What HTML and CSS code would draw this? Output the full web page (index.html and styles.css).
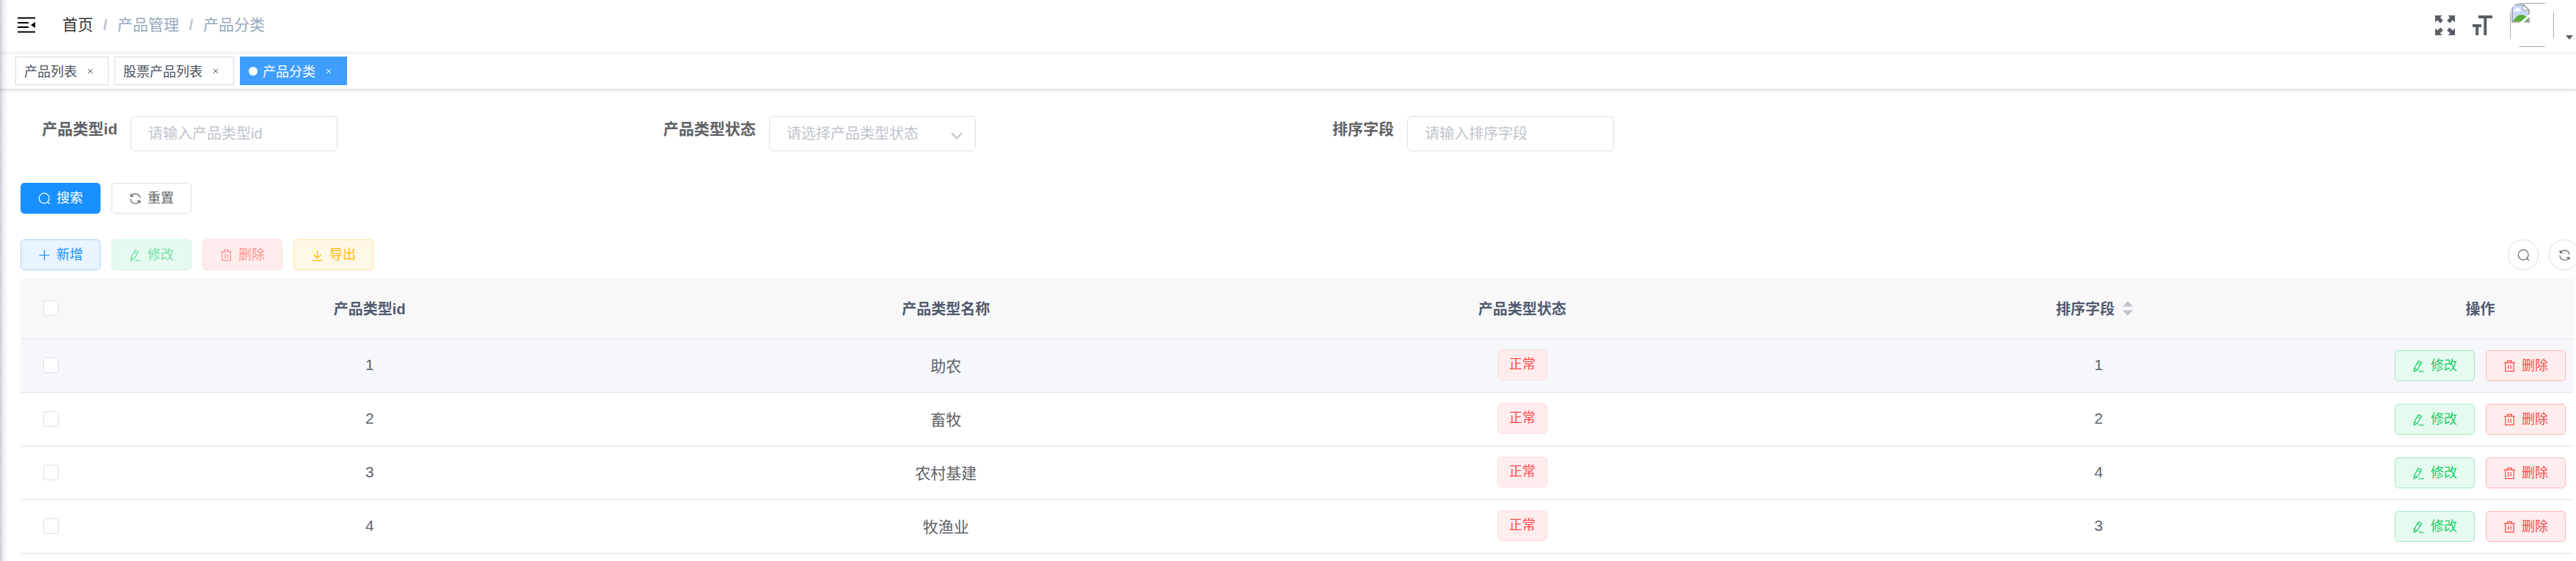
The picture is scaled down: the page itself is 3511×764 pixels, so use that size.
FILE: index.html
```html
<!DOCTYPE html>
<html lang="zh-CN">
<head>
<meta charset="utf-8">
<title>产品分类</title>
<link rel="stylesheet" href="styles.css">
</head>
<body>
<svg class="sprite" aria-hidden="true">
  <symbol id="i-search" viewBox="0 0 18 18"><circle cx="8.700" cy="8.500" r="7.300"/><path d="M13.700 13.700l3 3"/></symbol>
  <symbol id="i-refresh" viewBox="0 0 18 18"><path d="M2.500 2v3.700h3.700M2.900 5.500A7 7 0 0 1 15.900 8.200M15.600 16v-3.700h-3.700M15.200 12.500A7 7 0 0 1 2.100 9.200"/></symbol>
  <symbol id="i-plus" viewBox="0 0 18 18"><path d="M9 1.500v15M1.500 9h15"/></symbol>
  <symbol id="i-edit" viewBox="0 0 18 18"><path d="M8.900 1.800l4.300 2.500-6.100 10.300-4.700 2.300.4-5zM7.200 4.700l4.300 2.500M2.700 12.200l4.200 2.400M9 16.700h7.600"/></symbol>
  <symbol id="i-delete" viewBox="0 0 18 18"><path d="M1 4.200h16M6 4V1.500h6V4M3 4.200v12.300h12V4.200M7.200 7.500v6M10.800 7.500v6"/></symbol>
  <symbol id="i-download" viewBox="0 0 18 18"><path d="M9 1.500v11.700M3.800 8.200L9 13.300l5.200-5.100M2 16.500h14"/></symbol>
</svg>

<header class="navbar">
  <button class="icon-btn menu-btn" aria-label="折叠菜单">
    <svg width="24" height="22" viewBox="0 0 24 22"><path d="M0 1.500h24M0 8h15M0 14h15M0 20.500h24" stroke="#000" stroke-width="2"/><path d="M24 7v8l-6-4z"/></svg>
  </button>
  <nav class="breadcrumb" aria-label="面包屑">
    <a href="#">首页</a><span class="sep">/</span><span>产品管理</span><span class="sep">/</span><span>产品分类</span>
  </nav>
  <div class="nav-right">
    <button class="icon-btn" aria-label="全屏">
      <svg width="27" height="27" viewBox="0 0 27 27" fill="#5a5e66"><g id="arrow"><path d="M0 0h9.500L6.800 2.800l4 4-3.500 3.600-4.200-4L0 9.500z"/></g><use href="#arrow" transform="matrix(-1 0 0 1 27 0)"/><use href="#arrow" transform="matrix(1 0 0 -1 0 27)"/><use href="#arrow" transform="matrix(-1 0 0 -1 27 27)"/></svg>
    </button>
    <button class="icon-btn" aria-label="布局大小">
      <svg width="27" height="27" viewBox="0 0 27 27"><path d="M8 2h19M17.300 2v25M0 14h12M6.200 14v13" stroke="#5a5e66" stroke-width="4"/></svg>
    </button>
    <button class="icon-btn avatar-btn" aria-label="用户菜单">
      <span class="avatar">
        <svg width="60" height="60" viewBox="0 0 60 60"><rect x=".5" y=".5" width="59" height="59" fill="none" stroke="#a8a8a8"/><path d="M3 2.500h15.500l7.500 7V26H3z" fill="#c9dafa" stroke="#9a9a9a" stroke-width="1.500"/><path d="M18 3v7h8z" fill="#fff" stroke="#9a9a9a"/><path d="M5 11c1-3 3-2 3.500-4 2-2 4 0 4 1.500 2 0 3 1.500 3 2.500z" fill="#fff"/><path d="M4 25c3-5 7-9 11-9s7 2 10 5v4z" fill="#5aae3c"/><path d="M13 27L27 15v4l-9 8z" fill="#fff"/></svg>
      </span>
      <svg width="10" height="6" viewBox="0 0 10 6"><path d="M0 0h10L5 6z" fill="#5a5e66"/></svg>
    </button>
  </div>
</header>

<nav class="tags" aria-label="标签页">
  <div class="tab"><a href="#">产品列表</a><button class="close" aria-label="关闭产品列表"><svg width="8" height="8" viewBox="0 0 8 8"><path d="M1 1l6 6M7 1L1 7"/></svg></button></div>
  <div class="tab"><a href="#">股票产品列表</a><button class="close" aria-label="关闭股票产品列表"><svg width="8" height="8" viewBox="0 0 8 8"><path d="M1 1l6 6M7 1L1 7"/></svg></button></div>
  <div class="tab active"><a href="#">产品分类</a><button class="close" aria-label="关闭产品分类"><svg width="8" height="8" viewBox="0 0 8 8"><path d="M1 1l6 6M7 1L1 7"/></svg></button></div>
</nav>

<main class="main">
  <form>
    <div class="filters">
      <div class="field"><label for="type-id">产品类型id</label><input id="type-id" type="text" placeholder="请输入产品类型id"></div>
      <div class="field"><label for="type-status">产品类型状态</label>
        <span class="select"><select id="type-status"><option>请选择产品类型状态</option><option>正常</option></select><svg width="16" height="10" viewBox="0 0 16 10"><path d="M1 1l7 7.500L15 1"/></svg></span>
      </div>
      <div class="field"><label for="sort">排序字段</label><input id="sort" type="text" placeholder="请输入排序字段"></div>
    </div>
    <div class="buttons">
      <button class="btn solid" type="button"><svg><use href="#i-search"/></svg>搜索</button>
      <button class="btn" type="button"><svg><use href="#i-refresh"/></svg>重置</button>
    </div>
  </form>

  <div class="toolbar">
    <div class="buttons">
      <button class="btn blue"><svg><use href="#i-plus"/></svg>新增</button>
      <button class="btn green" disabled><svg><use href="#i-edit"/></svg>修改</button>
      <button class="btn red" disabled><svg><use href="#i-delete"/></svg>删除</button>
      <button class="btn yellow"><svg><use href="#i-download"/></svg>导出</button>
    </div>
    <div class="buttons tools">
      <button class="btn circle" aria-label="搜索"><svg><use href="#i-search"/></svg></button>
      <button class="btn circle" aria-label="刷新"><svg><use href="#i-refresh"/></svg></button>
    </div>
  </div>

  <table class="table">
    <colgroup><col class="col-check"><col><col><col><col><col class="col-ops"></colgroup>
    <thead>
      <tr><th><input type="checkbox" aria-label="全选"></th><th>产品类型id</th><th>产品类型名称</th><th>产品类型状态</th><th><span class="sortable">排序字段<button class="sort" aria-label="排序"><svg width="14" height="20" viewBox="0 0 14 20"><path d="M0 7.500L7 0l7 7.500zM0 12.500h14L7 20z" fill="#c0c4cc"/></svg></button></span></th><th>操作</th></tr>
    </thead>
    <tbody>
      <tr class="hover"><td><input type="checkbox" aria-label="选择 1"></td><td>1</td><td>助农</td><td><span class="status">正常</span></td><td>1</td><td><div class="buttons ops"><button class="btn green"><svg><use href="#i-edit"/></svg>修改</button><button class="btn red"><svg><use href="#i-delete"/></svg>删除</button></div></td></tr>
      <tr><td><input type="checkbox" aria-label="选择 2"></td><td>2</td><td>畜牧</td><td><span class="status">正常</span></td><td>2</td><td><div class="buttons ops"><button class="btn green"><svg><use href="#i-edit"/></svg>修改</button><button class="btn red"><svg><use href="#i-delete"/></svg>删除</button></div></td></tr>
      <tr><td><input type="checkbox" aria-label="选择 3"></td><td>3</td><td>农村基建</td><td><span class="status">正常</span></td><td>4</td><td><div class="buttons ops"><button class="btn green"><svg><use href="#i-edit"/></svg>修改</button><button class="btn red"><svg><use href="#i-delete"/></svg>删除</button></div></td></tr>
      <tr><td><input type="checkbox" aria-label="选择 4"></td><td>4</td><td>牧渔业</td><td><span class="status">正常</span></td><td>3</td><td><div class="buttons ops"><button class="btn green"><svg><use href="#i-edit"/></svg>修改</button><button class="btn red"><svg><use href="#i-delete"/></svg>删除</button></div></td></tr>
    </tbody>
  </table>
</main>
<div class="side-shadow"></div>
</body>
</html>
```
FILE: styles.css
```css
*, *::before, *::after { box-sizing: border-box; }
body {
  margin: 0;
  overflow-x: hidden;
  background: #fff;
  color: #606266;
  font-family: "Liberation Sans", "Noto Sans CJK SC", sans-serif;
  font-size: 21px;
}
button, input, select { font: inherit; color: inherit; margin: 0; }
a { color: inherit; text-decoration: none; }
svg { display: block; flex: none; }
.sprite { position: absolute; width: 0; height: 0; }
.side-shadow {
  position: absolute;
  top: 0;
  bottom: 0;
  left: 0;
  width: 11px;
  background: linear-gradient(to right, rgba(70, 74, 100, .28), rgba(70, 74, 100, .08) 45%, rgba(70, 74, 100, 0));
  pointer-events: none;
}

.navbar {
  display: flex;
  align-items: center;
  height: 71px;
  padding: 0 4px 3px 24px;
  box-shadow: 0 1px 6px rgba(0, 21, 41, .1);
}
.icon-btn { display: flex; padding: 0; border: 0; background: none; }
.breadcrumb { display: flex; margin-left: 37px; line-height: 32px; color: #97a8be; }
.breadcrumb a { color: #303133; }
.sep { width: 33px; text-align: center; color: #c0c4cc; font-weight: bold; }
.nav-right { display: flex; align-items: center; gap: 24px; margin-left: auto; }
.avatar-btn { align-items: flex-end; gap: 16px; padding-bottom: 0; }
.avatar-btn > svg { margin-bottom: 10px; }
.avatar { width: 60px; height: 60px; border-radius: 15px; overflow: hidden; }

.tags {
  display: flex;
  gap: 8px;
  padding: 6px 21px;
  height: 51px;
  border-bottom: 1px solid #d8dce5;
  box-shadow: 0 1px 4px rgba(0, 0, 0, .14);
}
.tab {
  display: flex;
  align-items: center;
  height: 39px;
  padding: 0 12px 2px 11px;
  border: 1px solid #d8dce5;
  color: #495060;
  font-size: 18px;
}
.tab.active { border-color: #409eff; background: #409eff; color: #fff; }
.tab.active::before { content: ""; width: 12px; height: 12px; margin: 2px 7px 0 0; border-radius: 50%; background: #fff; }
.close { display: flex; justify-content: center; width: 24px; margin-left: 6px; padding: 3px 0 0; border: 0; background: none; }
.close path { fill: none; stroke: currentColor; }

.main { padding: 36px 3px 0 28px; }
.filters { display: grid; grid-template-columns: repeat(4, 1fr); margin-bottom: 43px; }
.field { display: flex; }
.field label { width: 150px; padding-right: 18px; text-align: right; font-weight: bold; line-height: 36px; }
.field input, .field select {
  width: 282px;
  height: 48px;
  padding: 0 23px;
  border: 1px solid #dcdfe6;
  border-radius: 6px;
  background: #fff;
  color: #c0c4cc;
  font-size: 20px;
  appearance: none;
}
.field input::placeholder { color: #c0c4cc; opacity: 1; }
.select { display: grid; align-items: center; }
.select > * { grid-area: 1 / 1; }
.select svg { justify-self: end; margin: 6px 18px 0 0; pointer-events: none; }
.select path { fill: none; stroke: #c0c4cc; stroke-width: 2; }

.buttons { display: flex; gap: 15px; }
.btn {
  display: flex;
  align-items: center;
  justify-content: center;
  gap: 8px;
  width: 109px;
  height: 42px;
  padding: 0;
  border: 1px solid #dcdfe6;
  border-radius: 5px;
  background: #fff;
  font-size: 18px;
  line-height: 24px;
}
.btn svg { width: 17px; height: 17px; fill: none; stroke: currentColor; stroke-width: 1.3; }
.solid { border-color: #1890ff; background: #1890ff; color: #fff; }
.blue { border-color: #a3d3ff; background: #e8f4ff; color: #1890ff; }
.green { border-color: #a1e9bf; background: #e7faf0; color: #13ce66; }
.red { border-color: #ffb6b6; background: #ffeded; color: #ff4949; }
.yellow { border-color: #ffe399; background: #fff8e6; color: #ffba00; }
.green:disabled { border-color: #d0f5e0; color: #71e2a3; }
.red:disabled { border-color: #ffdbdb; color: #ff9292; }
.circle { width: 42px; border-radius: 50%; }
.toolbar { display: flex; justify-content: space-between; margin: 35px 0 12px; }
.tools { gap: 14px; margin-right: -8px; }

.table { width: 100%; table-layout: fixed; border-collapse: separate; border-spacing: 0; }
.col-check { width: 83px; }
.col-ops { width: 255px; }
.table th, .table td { padding: 0 0 2px; border-bottom: 1px solid #dfe6ec; text-align: center; vertical-align: middle; }
.table th { height: 82px; background: #f8f8f9; color: #515a6e; font-size: 20px; }
.table td { height: 73px; }
.table td:last-child { padding: 0; }
.hover td { background: #f5f7fb; }
.table input {
  display: block;
  width: 21px;
  height: 21px;
  margin: 0 auto;
  border: 1px solid #dcdfe6;
  border-radius: 3px;
  background: #fff;
  appearance: none;
}
.sortable { display: flex; align-items: center; justify-content: center; }
.sort { display: flex; justify-content: center; width: 36px; padding: 0; border: 0; background: none; }
.status {
  display: block;
  width: 68px;
  height: 42px;
  margin: 0 auto;
  border: 1px solid #ffdbdb;
  border-radius: 6px;
  background: #ffeded;
  color: #ff4949;
  font-size: 18px;
  line-height: 38px;
}
.ops { justify-content: center; }
```
